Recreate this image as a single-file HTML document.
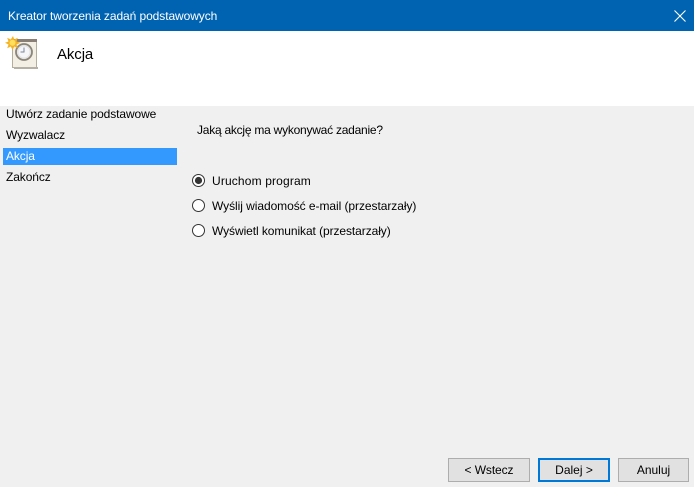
<!DOCTYPE html>
<html lang="pl">
<head>
<meta charset="utf-8">
<style>
html,body{margin:0;padding:0;width:694px;height:487px;overflow:hidden;background:#f0f0f0;font-family:"Liberation Sans",sans-serif;font-size:12px;color:#000}
.a{position:absolute;white-space:nowrap;line-height:16px}
#bar{position:absolute;left:0;top:0;width:694px;height:31px;background:#0063b1}
#head{position:absolute;left:0;top:31px;width:694px;height:75px;background:#fff}
#sel{position:absolute;left:3px;top:148px;width:174px;height:17px;background:#3399ff}
.b{position:absolute;top:458px;height:24px;box-sizing:border-box;border:1px solid #adadad;background:#e1e1e1;text-align:center;line-height:22px}
.r{position:absolute;left:192px}
</style>
</head>
<body>
<div id="bar"></div>
<div class="a" style="left:8px;top:8px;color:#fff;letter-spacing:-.08px">Kreator tworzenia zadań podstawowych</div>
<svg style="position:absolute;left:673px;top:9px" width="14" height="14" viewBox="0 0 14 14"><path d="M1.500 1.500L12.500 12.500M12.500 1.500L1.500 12.500" stroke="#fff" stroke-width="1.100" fill="none"/></svg>
<div id="head"></div>
<svg style="position:absolute;left:5px;top:36px" width="34" height="34" viewBox="0 0 34 34">
<rect x="7.500" y="5.500" width="24" height="26" fill="#f3efe4" stroke="#b5ae9f"/>
<rect x="7" y="3" width="25" height="3" fill="#8a7f75"/>
<rect x="9" y="31" width="24" height="2" fill="#b5b0a6"/>
<circle cx="19" cy="16" r="8" fill="#e4e4e6" stroke="#8b8678" stroke-width="1.800"/>
<circle cx="19" cy="16" r="5.500" fill="#f5f6f8"/>
<path d="M19 11.500V16H15.500" stroke="#7c879a" stroke-width="1" fill="none"/>
<path d="M8 0L9.200 3.500L12.800 1.800L11.500 5.500L15.500 6.800L11.500 8.500L12.800 12.200L9.200 10.500L7.500 14L5.800 10.500L2.200 12.200L3.500 8.500L0 6.800L3.500 5.500L2.200 1.800L5.800 3.500Z" fill="#f5b324"/>
<circle cx="7.500" cy="6.800" r="3" fill="#ffdf5e"/>
</svg>
<div class="a" style="left:57px;top:46px;font-size:15px;line-height:18px;letter-spacing:-.1px">Akcja</div>
<div id="sel"></div>
<div class="a" style="left:6px;top:106px;letter-spacing:-.1px">Utwórz zadanie podstawowe</div>
<div class="a" style="left:6px;top:127px;letter-spacing:-.1px">Wyzwalacz</div>
<div class="a" style="left:6px;top:148px;color:#fff;letter-spacing:-.1px">Akcja</div>
<div class="a" style="left:6px;top:169px;letter-spacing:-.1px">Zakończ</div>
<div class="a" style="left:197px;top:122px;letter-spacing:-.24px">Jaką akcję ma wykonywać zadanie?</div>
<svg class="r" style="top:174px" width="13" height="13" viewBox="0 0 13 13"><circle cx="6.500" cy="6.500" r="6" fill="#fff" stroke="#333"/><circle cx="6.500" cy="6.500" r="3.600" fill="#333"/></svg>
<svg class="r" style="top:199px" width="13" height="13" viewBox="0 0 13 13"><circle cx="6.500" cy="6.500" r="6" fill="#fff" stroke="#333"/></svg>
<svg class="r" style="top:224px" width="13" height="13" viewBox="0 0 13 13"><circle cx="6.500" cy="6.500" r="6" fill="#fff" stroke="#333"/></svg>
<div class="a" style="left:212px;top:173px;letter-spacing:.15px">Uruchom program</div>
<div class="a" style="left:212px;top:198px;letter-spacing:-.06px">Wyślij wiadomość e-mail (przestarzały)</div>
<div class="a" style="left:212px;top:223px;letter-spacing:-.08px">Wyświetl komunikat (przestarzały)</div>
<div class="b" style="left:448px;width:82px;letter-spacing:-.1px">&lt; Wstecz</div>
<div class="b" style="left:538px;width:72px;border:2px solid #0078d7;line-height:20px">Dalej &gt;</div>
<div class="b" style="left:618px;width:71px">Anuluj</div>
</body>
</html>
